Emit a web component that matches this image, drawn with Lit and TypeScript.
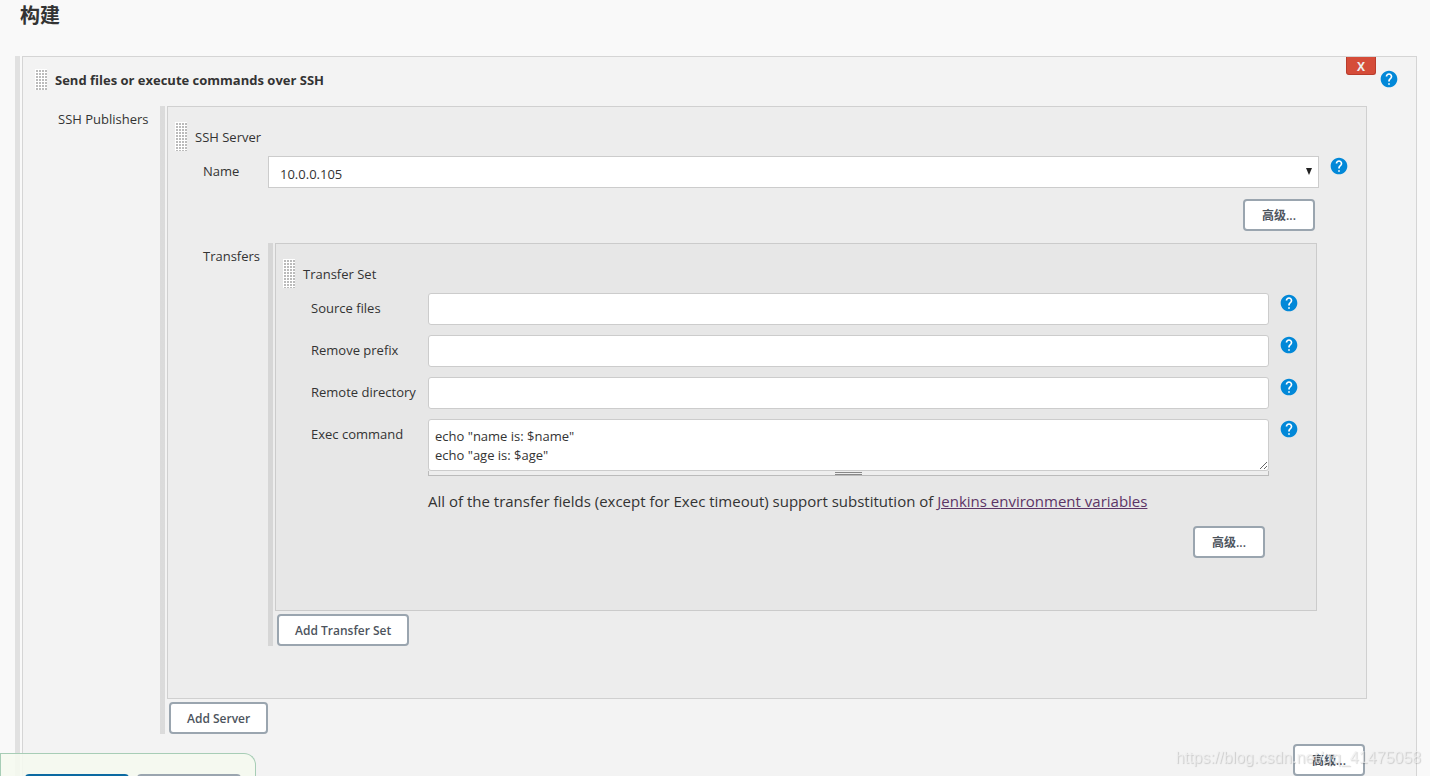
import { LitElement, html, css } from "lit";
import { customElement, property, state } from "lit/decorators.js";

const font = css`"Open Sans", "Noto Sans", "Noto Sans CJK SC", sans-serif`;

@customElement("help-button")
class HelpButton extends LitElement {
  @property() topic = "";

  static styles = css`
    :host { display: block; }
    .help {
      display: block;
      width: 20px;
      height: 20px;
      margin: 0;
      padding: 0;
      border: 0;
      background: none;
      cursor: pointer;
    }
    .icon { display: block; width: 20px; height: 20px; }
  `;

  render() {
    return html`<button class="help" type="button" aria-label="Help: ${this.topic}">
      <svg class="icon" viewBox="0 0 24 24" aria-hidden="true">
        <circle cx="12" cy="12" r="9" fill="#fff" />
        <path fill="#0288d8" d="M12 2C6.48 2 2 6.48 2 12s4.48 10 10 10 10-4.48 10-10S17.52 2 12 2zm1 17h-2v-2h2v2zm2.07-7.75l-.9.92C13.45 12.9 13 13.5 13 15h-2v-.5c0-1.1.45-2.1 1.17-2.83l1.24-1.26c.37-.36.59-.86.59-1.41 0-1.1-.9-2-2-2s-2 .9-2 2H8c0-2.21 1.79-4 4-4s4 1.79 4 4c0 .88-.36 1.68-.93 2.25z" />
      </svg>
    </button>`;
  }
}

@customElement("app-root")
class AppRoot extends LitElement {
  @state() private command = 'echo "name is: $name"\necho "age is: $age"';

  static styles = css`
    :host {
      display: block;
      min-height: 100vh;
      background: #f9f9f9;
      color: #333;
      font: 13px/20px ${font};
    }
    * { box-sizing: border-box; }
    .page { padding: 0 13px 0 15px; }
    .title {
      margin: 0;
      padding: 0 5px 24px;
      font-size: 20px;
      line-height: 32px;
      font-weight: 700;
    }
    .list {
      padding-left: 7px;
      background: linear-gradient(#00000019, #00000019) left / 5px 100% no-repeat;
    }
    .chunk {
      position: relative;
      border: 1px solid rgba(0, 0, 0, 0.12);
      background: rgba(0, 0, 0, 0.0235);
    }
    .nested { margin-right: 2px; padding-bottom: 52px; }
    .head { display: flex; gap: 8px; align-items: center; padding: 15px 7px 5px; height: 49px; }
    .main-head { padding: 12px 5px 16px 12px; align-items: flex-start; }
    .main-head .grip { height: 21px; }
    .main-title { flex: 1; margin: 0; padding-top: 1px; font-size: 13px; line-height: 20px; font-weight: 700; }
    .main-head help-button { margin-right: 12px; }
    .grip {
      flex: none;
      width: 12px;
      height: 29px;
      background:
        linear-gradient(90deg, #fff 1px, transparent 1px) 0 0 / 3px 3px,
        linear-gradient(#fff 1px, transparent 1px) 0 0 / 3px 3px,
        #bbb;
      cursor: move;
    }
    .row { display: grid; grid-template-columns: var(--label) minmax(0, 1fr) 47px; }
    .publishers { --label: 137px; }
    .server { --label: 100px; }
    .transfer { --label: 152px; }
    .label { padding: 3px 0 0 35px; white-space: nowrap; }
    .field-label { padding-top: 5px; }
    .row help-button { padding-left: 10px; }
    .field { margin-bottom: 10px; }
    .input, .area, .select {
      display: block;
      width: 100%;
      margin: 0;
      border: 1px solid #ccc;
      border-radius: 3px;
      background: #fff;
      color: #333;
      font: 13px/19px ${font};
    }
    .input { height: 32px; padding: 6px; }
    .select-wrap { position: relative; }
    .select { height: 32px; padding: 4px 11px 0; border-radius: 0; appearance: none; }
    .arrow {
      position: absolute;
      right: 7px;
      top: 12px;
      width: 6px;
      height: 7px;
      background: #222;
      clip-path: polygon(0 0, 100% 0, 50% 100%);
      pointer-events: none;
    }
    .area { height: 52px; padding: 7px 6px; overflow: hidden; resize: vertical; }
    .resizer {
      display: grid;
      justify-items: center;
      align-items: end;
      height: 5px;
      border: 1px solid #bbb;
      border-top: 0;
      background: #eee;
      cursor: s-resize;
    }
    .resizer-mark { width: 27px; height: 3px; border: solid #888; border-width: 1px 0; }
    .note { margin: 0; padding: 14px 0 13px; font-size: 15px; line-height: 23px; }
    .note a { color: #5c3566; }
    .button {
      min-width: 72px;
      height: 32px;
      margin: 0;
      padding: 2px 16px 0;
      border: 2px solid #9aa5af;
      border-radius: 4px;
      background: #fff;
      color: #4d545d;
      font: 600 12px/20px ${font};
      cursor: pointer;
    }
    .advanced { display: flex; justify-content: flex-end; padding-right: 51px; }
    .after-field { padding-top: 1px; padding-bottom: 12px; }
    .after-list { padding-top: 10px; padding-bottom: 40px; }
    .add { display: block; margin: 3px 0 0 2px; }
    .delete {
      position: absolute;
      top: 0;
      right: 40px;
      width: 30px;
      height: 18px;
      padding: 2px 0 0;
      border: 1px solid #b93c2c;
      border-top: 0;
      border-radius: 0 0 3px 3px;
      background: #d54c39;
      color: #eee;
      font: 700 12px/15px ${font};
      cursor: pointer;
    }
    .save-bar {
      position: fixed;
      left: 0;
      bottom: 0;
      display: flex;
      gap: 8px;
      width: 256px;
      height: 23px;
      padding: 20px 14px 0 24px;
      overflow: hidden;
      border: 1px solid #a7cdb6;
      border-bottom: 0;
      border-radius: 0 12px 0 0;
      background: rgba(245, 249, 239, 0.9);
    }
    .save, .apply { flex: none; width: 104px; height: 32px; border: 0; border-radius: 4px; background: #0b6aa2; }
    .apply { background: #9aa5af; }
    .watermark {
      position: fixed;
      right: 9px;
      bottom: 8px;
      color: rgba(240, 240, 240, 0.7);
      font: 16px/20px "Liberation Sans", sans-serif;
      text-shadow: 1px 1px 1px rgba(0, 0, 0, 0.16);
      pointer-events: none;
    }
  `;

  private textRow(id: string, label: string) {
    return html`<div class="row field">
      <label class="label field-label" for=${id}>${label}</label>
      <input class="input" id=${id} type="text" />
      <help-button topic=${label}></help-button>
    </div>`;
  }

  private transferSet() {
    return html`<section class="chunk nested transfer">
      <div class="head"><span class="grip"></span><span>Transfer Set</span></div>
      ${this.textRow("source", "Source files")}
      ${this.textRow("prefix", "Remove prefix")}
      ${this.textRow("directory", "Remote directory")}
      <div class="row">
        <label class="label field-label" for="command">Exec command</label>
        <div>
          <textarea
            class="area"
            id="command"
            spellcheck="false"
            .value=${this.command}
            @input=${(e: Event) => (this.command = (e.target as HTMLTextAreaElement).value)}
          ></textarea>
          <div class="resizer"><span class="resizer-mark"></span></div>
          <p class="note">
            All of the transfer fields (except for Exec timeout) support substitution of
            <a href="#env">Jenkins environment variables</a>
          </p>
        </div>
        <help-button topic="Exec command"></help-button>
      </div>
      <div class="advanced"><button class="button" type="button">高级...</button></div>
    </section>`;
  }

  private server() {
    return html`<section class="chunk nested server">
      <div class="head"><span class="grip"></span><span>SSH Server</span></div>
      <div class="row field">
        <label class="label field-label" for="server">Name</label>
        <div class="select-wrap">
          <select class="select" id="server"><option>10.0.0.105</option></select>
          <span class="arrow"></span>
        </div>
        <help-button topic="Name"></help-button>
      </div>
      <div class="advanced after-field"><button class="button" type="button">高级...</button></div>
      <div class="row">
        <span class="label">Transfers</span>
        <div class="list">
          ${this.transferSet()}
          <button class="button add" type="button">Add Transfer Set</button>
        </div>
      </div>
    </section>`;
  }

  render() {
    return html`
      <main class="page">
        <h1 class="title">构建</h1>
        <div class="list">
          <section class="chunk publishers">
            <div class="head main-head">
              <span class="grip"></span>
              <h2 class="main-title">Send files or execute commands over SSH</h2>
              <help-button topic="SSH"></help-button>
            </div>
            <button class="delete" type="button">X</button>
            <div class="row">
              <span class="label">SSH Publishers</span>
              <div class="list">
                ${this.server()}
                <button class="button add" type="button">Add Server</button>
              </div>
            </div>
            <div class="advanced after-list"><button class="button" type="button">高级...</button></div>
          </section>
        </div>
      </main>
      <div class="save-bar">
        <button class="save" type="button" aria-label="保存"></button>
        <button class="apply" type="button" aria-label="应用"></button>
      </div>
      <div class="watermark">https://blog.csdn.net/qq_41475058</div>
    `;
  }
}
